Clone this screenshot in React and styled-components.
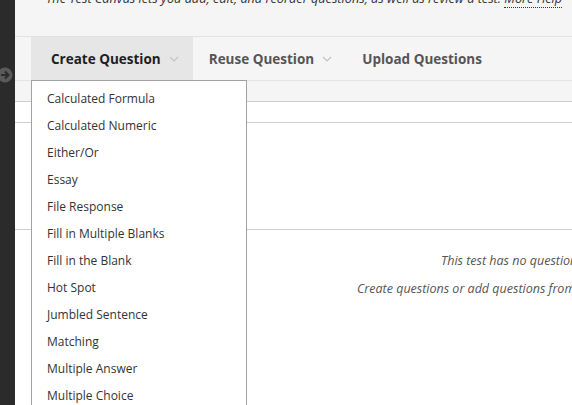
import React from "react";
import styled, { createGlobalStyle } from "styled-components";

const Global = createGlobalStyle`
  html, body { margin: 0; padding: 0; }
  body { font-family: "Open Sans", "Noto Sans", sans-serif; background: #fff; }
`;

const Page = styled.div`
  display: flex;
  width: 572px;
  height: 405px;
  overflow: hidden;
`;

const Sidebar = styled.div`
  width: 15px;
  flex: none;
  background: #2b2b2b;
  display: flex;
  flex-direction: column;
  overflow: hidden;
`;

const CollapseIcon = styled.svg`
  margin-top: 67px;
  margin-left: -3px;
  flex: none;
`;

const Main = styled.div`
  flex: 1;
  position: relative;
  display: flex;
  flex-direction: column;
  min-width: 0;
  overflow: hidden;
`;

const Intro = styled.div`
  height: 36px;
  background: #f5f5f5;
  padding-left: 31px;
  overflow: hidden;
`;

const IntroText = styled.p`
  margin: -12px 0 0;
  font-size: 12.7px;
  line-height: 20px;
  font-style: italic;
  color: #333;
  white-space: nowrap;
`;

const HelpLink = styled.span`
  border-bottom: 1px dotted #333;
`;

const Toolbar = styled.div`
  height: 43px;
  background: #f5f5f5;
  border-top: 1px solid #e2e2e2;
  border-bottom: 1px solid #e4e4e4;
  padding-left: 16px;
  display: flex;
`;

const Tab = styled.div`
  display: flex;
  align-items: center;
  gap: 8px;
  padding: 0 14px 0 ${(p) => (p.$active ? 20 : 16)}px;
  background: ${(p) => (p.$active ? "#e6e6e6" : "transparent")};
  color: ${(p) => (p.$active ? "#1e1e1e" : "#555")};
  font-size: 13.5px;
  font-weight: 700;
  white-space: nowrap;
`;

const Chevron = styled.svg`
  flex: none;
`;

const SubBar = styled.div`
  height: 20px;
  background: #f5f5f5;
  border-bottom: 1px solid #cdcdcd;
`;

const Band = styled.div`
  height: ${(p) => p.$h}px;
  background: #fff;
  border-bottom: 1px solid #cdcdcd;
`;

const Empty = styled.div`
  display: flex;
  flex-direction: column;
  gap: 8px;
  padding-top: 21px;
`;

const EmptyLine = styled.p`
  margin: 0;
  padding-left: ${(p) => p.$indent}px;
  font-size: 12.5px;
  line-height: 20px;
  font-style: italic;
  color: #555;
  white-space: nowrap;
`;

const Menu = styled.ul`
  position: absolute;
  left: 16px;
  top: 80px;
  width: 214px;
  height: 340px;
  margin: 0;
  padding: 4px 0 0;
  list-style: none;
  background: #fff;
  border: 1px solid #a2a2a2;
`;

const MenuItem = styled.li`
  height: 27px;
  line-height: 27px;
  padding-left: 15px;
  font-size: 12px;
  color: #333;
  white-space: nowrap;
`;

const items = [
  "Calculated Formula",
  "Calculated Numeric",
  "Either/Or",
  "Essay",
  "File Response",
  "Fill in Multiple Blanks",
  "Fill in the Blank",
  "Hot Spot",
  "Jumbled Sentence",
  "Matching",
  "Multiple Answer",
  "Multiple Choice",
];

const Down = () => (
  <Chevron width="10" height="6" viewBox="0 0 10 6">
    <path d="M1 1l4 4 4-4" fill="none" stroke="#c4c4c4" strokeWidth="1.2" />
  </Chevron>
);

export default function App() {
  return (
    <Page>
      <Global />
      <Sidebar>
        <CollapseIcon width="16" height="16" viewBox="0 0 16 16">
          <circle cx="8" cy="8" r="7.5" fill="#5a5a5a" />
          <path d="M4 8h7M8 4.5L11.5 8 8 11.5" fill="none" stroke="#2b2b2b" strokeWidth="2" />
        </CollapseIcon>
      </Sidebar>
      <Main>
        <Intro>
          <IntroText>
            The Test Canvas lets you add, edit, and reorder questions, as well as review a test. <HelpLink>More Help</HelpLink>
          </IntroText>
        </Intro>
        <Toolbar>
          <Tab $active>
            Create Question <Down />
          </Tab>
          <Tab>
            Reuse Question <Down />
          </Tab>
          <Tab>Upload Questions</Tab>
        </Toolbar>
        <SubBar />
        <Band $h={20} />
        <Band $h={106} />
        <Empty>
          <EmptyLine $indent={426}>This test has no questions.</EmptyLine>
          <EmptyLine $indent={342}>Create questions or add questions from the Reuse Question menu.</EmptyLine>
        </Empty>
        <Menu>
          {items.map((t) => (
            <MenuItem key={t}>{t}</MenuItem>
          ))}
        </Menu>
      </Main>
    </Page>
  );
}
